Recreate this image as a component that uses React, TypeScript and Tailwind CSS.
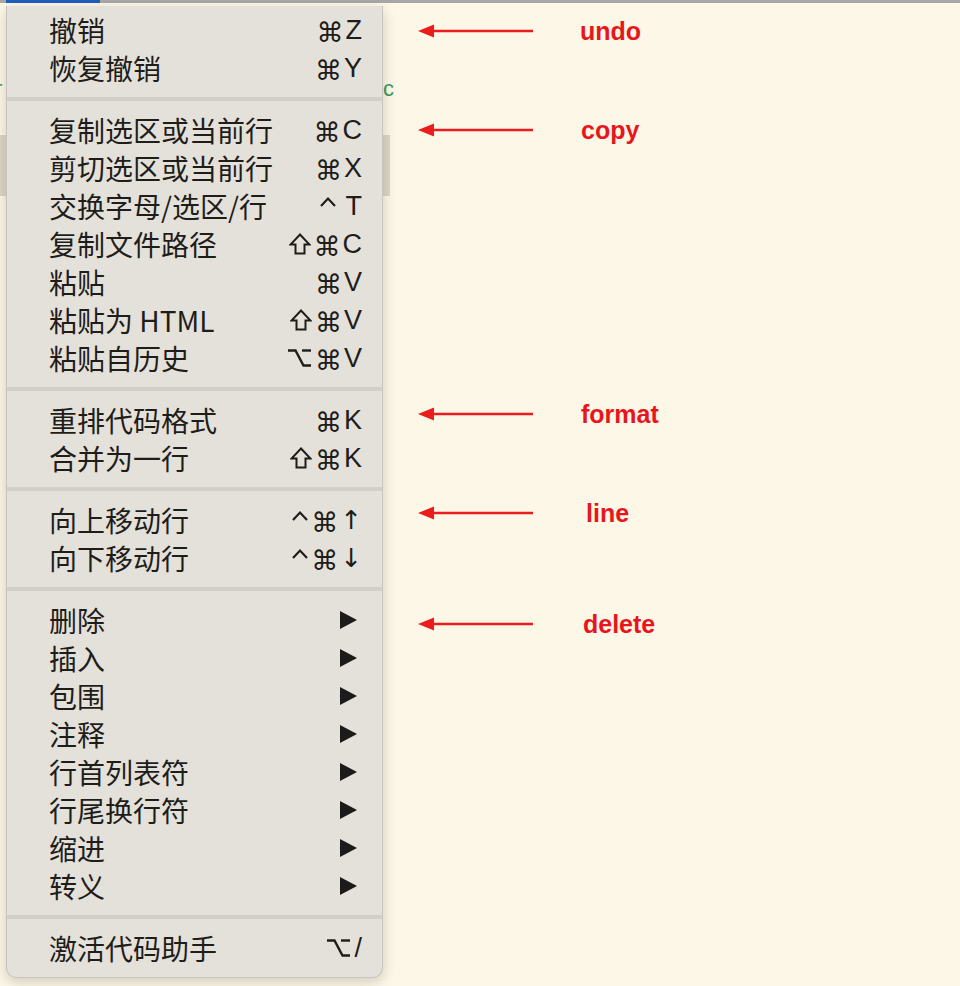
import React from 'react';

type Item =
  | { kind: 'item'; label: string; keys?: string[]; sub?: boolean }
  | { kind: 'sep' };

const ITEMS: Item[] = [
  { kind: 'item', label: '撤销', keys: ['cmd', 'Z'] },
  { kind: 'item', label: '恢复撤销', keys: ['cmd', 'Y'] },
  { kind: 'sep' },
  { kind: 'item', label: '复制选区或当前行', keys: ['cmd', 'C'] },
  { kind: 'item', label: '剪切选区或当前行', keys: ['cmd', 'X'] },
  { kind: 'item', label: '交换字母/选区/行', keys: ['ctrl', 'sp', 'T'] },
  { kind: 'item', label: '复制文件路径', keys: ['shift', 'cmd', 'C'] },
  { kind: 'item', label: '粘贴', keys: ['cmd', 'V'] },
  { kind: 'item', label: '粘贴为 HTML', keys: ['shift', 'cmd', 'V'] },
  { kind: 'item', label: '粘贴自历史', keys: ['opt', 'cmd', 'V'] },
  { kind: 'sep' },
  { kind: 'item', label: '重排代码格式', keys: ['cmd', 'K'] },
  { kind: 'item', label: '合并为一行', keys: ['shift', 'cmd', 'K'] },
  { kind: 'sep' },
  { kind: 'item', label: '向上移动行', keys: ['ctrl', 'cmd', '↑'] },
  { kind: 'item', label: '向下移动行', keys: ['ctrl', 'cmd', '↓'] },
  { kind: 'sep' },
  { kind: 'item', label: '删除', sub: true },
  { kind: 'item', label: '插入', sub: true },
  { kind: 'item', label: '包围', sub: true },
  { kind: 'item', label: '注释', sub: true },
  { kind: 'item', label: '行首列表符', sub: true },
  { kind: 'item', label: '行尾换行符', sub: true },
  { kind: 'item', label: '缩进', sub: true },
  { kind: 'item', label: '转义', sub: true },
  { kind: 'sep' },
  { kind: 'item', label: '激活代码助手', keys: ['opt', '/'] },
];

const NOTES = [
  { text: 'undo', cls: 'mt-[13px]', shift: 'ml-[46px]' },
  { text: 'copy', cls: 'mt-[69px]', shift: 'ml-[47px]' },
  { text: 'format', cls: 'mt-[254px]', shift: 'ml-[47px]' },
  { text: 'line', cls: 'mt-[69px]', shift: 'ml-[52px]' },
  { text: 'delete', cls: 'mt-[81px]', shift: 'ml-[49px]' },
];

const INK = '#1f1d1a';

function Arrow() {
  return (
    <svg width="116" height="16" viewBox="0 0 116 16" className="shrink-0">
      <line x1="10" y1="8" x2="115" y2="8" stroke="#ea1c1c" strokeWidth="2.5" />
      <polygon points="0,8 16,1.5 16,14.5" fill="#ea1c1c" />
    </svg>
  );
}

function SubArrow() {
  return (
    <svg width="18" height="18" viewBox="0 0 18 18" className="mr-[4px]">
      <polygon points="0,0 17,9 0,18" fill="#1c1b1a" />
    </svg>
  );
}

function Key({ k }: { k: string }) {
  if (k === 'sp') return <span className="w-[6px]" />;
  if (k === 'cmd')
    return (
      <span className="text-[27px] leading-none font-['DejaVu_Sans',sans-serif] translate-y-[2px] mr-[1px]">⌘</span>
    );
  if (k === 'shift')
    return (
      <svg width="22" height="22" viewBox="0 0 22 22" className="mr-[2px]">
        <polygon points="11,1.5 20.5,11.5 15.5,11.5 15.5,20.5 6.5,20.5 6.5,11.5 1.5,11.5" fill="none" stroke={INK} strokeWidth="2" />
      </svg>
    );
  if (k === 'ctrl')
    return (
      <svg width="18" height="22" viewBox="0 0 18 22" className="mr-[1px]">
        <polyline points="2,11 9,3.5 16,11" fill="none" stroke={INK} strokeWidth="2.2" />
      </svg>
    );
  if (k === 'opt')
    return (
      <svg width="25" height="20" viewBox="0 0 25 20" className="mr-[2px]">
        <polyline points="1,2.5 8.5,2.5 16.5,17.5 24,17.5" fill="none" stroke={INK} strokeWidth="2.4" />
        <line x1="15" y1="2.5" x2="24" y2="2.5" stroke={INK} strokeWidth="2.4" />
      </svg>
    );
  if (k === '↑' || k === '↓')
    return <span className="text-[26px] leading-none font-['DejaVu_Sans',sans-serif]">{k}</span>;
  return <span className="text-[27px] leading-none font-['Liberation_Sans',sans-serif]">{k}</span>;
}

function Menu() {
  return (
    <div className="absolute left-[6px] top-[3px] w-[377px] bg-[#e4e1db] rounded-b-[10px] border border-t-0 border-[#c8c5bf] shadow-[0_4px_14px_rgba(0,0,0,0.18)] pt-[5px] pb-[10px]">
      {ITEMS.map((it, i) =>
        it.kind === 'sep' ? (
          <div key={i} className="h-[4px] bg-[#d2cfc9] my-[10px]" />
        ) : (
          <div key={i} className="h-[38px] flex items-center justify-between pl-[42px] pr-[20px]">
            <span className="text-[28px] leading-none text-[#1f1d1a] font-['Noto_Sans_CJK_SC',sans-serif]">
              {it.label}
            </span>
            {it.sub ? (
              <SubArrow />
            ) : (
              <span className="flex items-center gap-[1px] text-[#1f1d1a]">
                {it.keys?.map((k, j) => <Key key={j} k={k} />)}
              </span>
            )}
          </div>
        ),
      )}
    </div>
  );
}

export default function App() {
  return (
    <div className="w-[960px] h-[986px] bg-[#fdf7e7] overflow-hidden flex flex-col">
      {/* top strip */}
      <div className="h-[3px] bg-[#aaa7a9] flex shrink-0">
        <div className="ml-[6px] w-[94px] bg-[#1b5fc1]" />
      </div>
      <div className="flex flex-1">
        {/* editor pane under the menu */}
        <div className="relative w-[392px] shrink-0">
          <div className="h-[75px]" />
          <div className="h-[22px] flex justify-between text-[22px] leading-[22px] text-[#3c9a5c] font-['Liberation_Sans',sans-serif]">
            <span className="-ml-[5px]">r</span>
            <span className="mr-[-2px]">c</span>
          </div>
          <div className="h-[35px]" />
          <div className="h-[61px] w-[390px] bg-[#ddd6c3]" />
          <Menu />
        </div>
        {/* annotations */}
        <div className="flex flex-col pl-[26px]">
          {NOTES.map(n => (
            <div key={n.text} className={`h-[30px] flex items-center ${n.cls}`}>
              <Arrow />
              <span className={`${n.shift} text-[25px] font-bold text-[#e8161c] font-['Liberation_Sans',sans-serif] leading-none`}>
                {n.text}
              </span>
            </div>
          ))}
        </div>
      </div>
    </div>
  );
}
